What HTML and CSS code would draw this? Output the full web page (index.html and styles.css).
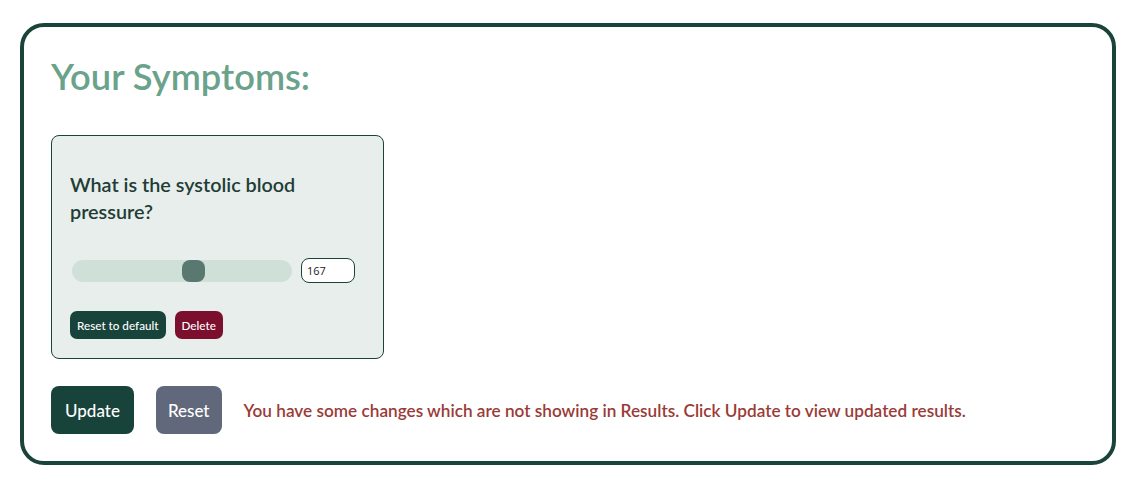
FILE: index.html
```html
<!DOCTYPE html>
<html>
<head>
<meta charset="utf-8">
<link rel="stylesheet" href="styles.css">
</head>
<body>
<div class="panel">
  <h1 class="title">Your Symptoms:</h1>
  <div class="card">
    <p class="question">What is the systolic blood pressure?</p>
    <div class="slider-row">
      <div class="track"><div class="thumb"></div></div>
      <div class="num">167</div>
    </div>
    <div class="card-actions">
      <button class="btn-sm dark">Reset to default</button>
      <button class="btn-sm red">Delete</button>
    </div>
  </div>
  <div class="actions">
    <button class="btn dark">Update</button>
    <button class="btn grey">Reset</button>
    <span class="msg">You have some changes which are not showing in Results. Click Update to view updated results.</span>
  </div>
</div>
</body>
</html>
```
FILE: styles.css
```css
html, body { margin: 0; padding: 0; background: #fff; }
body { font-family: Lato, "Open Sans", sans-serif; }
.panel {
  margin: 23px 31px 0 20px;
  width: 1096px;
  height: 442px;
  box-sizing: border-box;
  border: 4px solid #1a4339;
  border-radius: 24px;
  padding: 26px 27px 0 27px;
}
.title {
  margin: 0;
  font-size: 36.3px;
  line-height: 46px;
  font-weight: 600;
  color: #6aa28b;
}
.card {
  margin-top: 36px;
  width: 333px;
  height: 224px;
  box-sizing: border-box;
  background: #e8eeeb;
  border: 1px solid #1a4339;
  border-radius: 8px;
  padding: 35px 18px 0 18px;
}
.question {
  margin: 0;
  width: 280px;
  font-size: 19.8px;
  line-height: 27px;
  font-weight: 600;
  color: #1f3d36;
}
.slider-row {
  margin-top: 33px;
  display: flex;
  align-items: center;
  gap: 9px;
  padding-left: 2px;
}
.track {
  width: 220px;
  height: 22px;
  border-radius: 11px;
  background: #cfe0d9;
  display: flex;
  align-items: center;
  padding-left: 110px;
  box-sizing: border-box;
}
.thumb {
  width: 23px;
  height: 22px;
  border-radius: 8px;
  background: #587870;
}
.num {
  width: 54px;
  height: 25px;
  box-sizing: border-box;
  border: 1px solid #1a4339;
  border-radius: 8px;
  background: #fff;
  font-family: "Open Sans", sans-serif;
  font-size: 11px;
  line-height: 23px;
  padding-left: 5px;
  color: #222;
}
.card-actions {
  margin-top: 28px;
  display: flex;
  gap: 9px;
}
.btn-sm {
  border: none;
  height: 28px;
  border-radius: 7px;
  color: #fff;
  font-family: Lato, sans-serif;
  font-size: 11.7px;
  font-weight: 500;
  padding: 0 7px;
}
.dark { background: #17433a; }
.red { background: #7b0f2d; }
.grey { background: #61687b; }
.actions {
  margin-top: 27px;
  display: flex;
  align-items: center;
}
.btn {
  border: none;
  height: 48px;
  border-radius: 8px;
  color: #fff;
  font-family: Lato, sans-serif;
  font-size: 17px;
  font-weight: 500;
  padding: 0 14px;
  margin-right: 22px;
}
.btn.grey { padding: 0 12px; }
.msg {
  font-size: 17.2px;
  font-weight: 600;
  color: #9a3b37;
}
```
